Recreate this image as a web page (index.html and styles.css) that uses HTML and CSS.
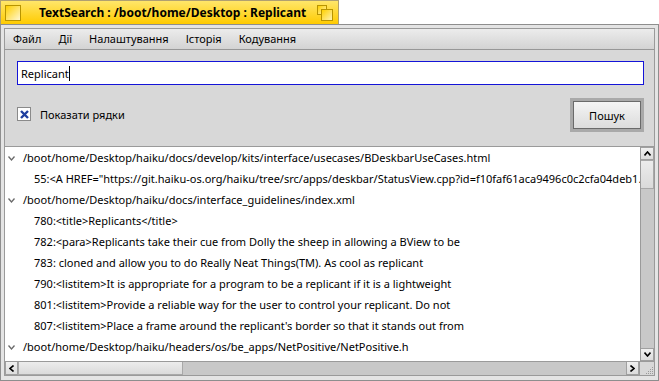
FILE: index.html
```html
<!DOCTYPE html>
<html lang="uk">
<head>
<meta charset="UTF-8">
<title>TextSearch</title>
<link rel="stylesheet" href="styles.css">
</head>
<body>
<div class="tab">
    <span class="close-box"></span>
    <span class="tab-title">TextSearch : /boot/home/Desktop : Replicant</span>
    <span class="zoom-box"><i class="zb-back"></i><i class="zb-front"></i></span>
</div>
<div class="window">
    <div class="menubar">
        <span class="menu-item">Файл</span>
        <span class="menu-item">Дії</span>
        <span class="menu-item">Налаштування</span>
        <span class="menu-item">Історія</span>
        <span class="menu-item">Кодування</span>
    </div>
    <div class="content">
        <div class="field">Replicant<span class="caret"></span></div>
        <div class="options">
            <label class="check">
                <span class="box">
                    <svg width="11" height="11" viewBox="0 0 11 11"><path d="M2 2 L9 9 M9 2 L2 9" stroke="#1f3f9f" stroke-width="2.4"/></svg>
                </span>
                Показати рядки
            </label>
            <div class="default-frame"><button class="button1">Пошук</button></div>
        </div>
        <div class="results">
            <div class="list-area">
                <div class="list">
                    <div class="row parent"><svg class="arrow" width="7" height="5" viewBox="0 0 7 5"><path d="M0.5 0.5 L3.5 4 L6.5 0.5" fill="none" stroke="#6a6a6a" stroke-width="1.3"/></svg>/boot/home/Desktop/haiku/docs/develop/kits/interface/usecases/BDeskbarUseCases.html</div>
                    <div class="row child">55:&lt;A HREF="https://git.haiku-os.org/haiku/tree/src/apps/deskbar/StatusView.cpp?id=f10faf61aca9496c0c2cfa04deb1.</div>
                    <div class="row parent"><svg class="arrow" width="7" height="5" viewBox="0 0 7 5"><path d="M0.5 0.5 L3.5 4 L6.5 0.5" fill="none" stroke="#6a6a6a" stroke-width="1.3"/></svg>/boot/home/Desktop/haiku/docs/interface_guidelines/index.xml</div>
                    <div class="row child">780:&lt;title&gt;Replicants&lt;/title&gt;</div>
                    <div class="row child">782:&lt;para&gt;Replicants take their cue from Dolly the sheep in allowing a BView to be</div>
                    <div class="row child">783: cloned and allow you to do Really Neat Things(TM). As cool as replicant</div>
                    <div class="row child">790:&lt;listitem&gt;It is appropriate for a program to be a replicant if it is a lightweight</div>
                    <div class="row child">801:&lt;listitem&gt;Provide a reliable way for the user to control your replicant. Do not</div>
                    <div class="row child">807:&lt;listitem&gt;Place a frame around the replicant's border so that it stands out from</div>
                    <div class="row parent"><svg class="arrow" width="7" height="5" viewBox="0 0 7 5"><path d="M0.5 0.5 L3.5 4 L6.5 0.5" fill="none" stroke="#6a6a6a" stroke-width="1.3"/></svg>/boot/home/Desktop/haiku/headers/os/be_apps/NetPositive/NetPositive.h</div>
                </div>
                <div class="vscroll">
                    <span class="sb-btn"><svg width="7" height="5" viewBox="0 0 7 5"><path d="M0.5 4.5 L3.5 1 L6.5 4.5" fill="none" stroke="#000" stroke-width="1.6"/></svg></span>
                    <span class="sb-thumb v"></span>
                    <span class="sb-track"></span>
                    <span class="sb-btn"><svg width="7" height="5" viewBox="0 0 7 5"><path d="M0.5 0.5 L3.5 4 L6.5 0.5" fill="none" stroke="#000" stroke-width="1.6"/></svg></span>
                </div>
            </div>
            <div class="hscroll">
                <span class="sb-btn"><svg width="5" height="7" viewBox="0 0 5 7"><path d="M4.5 0.5 L1 3.5 L4.5 6.5" fill="none" stroke="#000" stroke-width="1.6"/></svg></span>
                <span class="sb-thumb h"></span>
                <span class="sb-track"></span>
                <span class="sb-btn"><svg width="5" height="7" viewBox="0 0 5 7"><path d="M0.5 0.5 L4 3.5 L0.5 6.5" fill="none" stroke="#000" stroke-width="1.6"/></svg></span>
                <span class="corner">
                    <svg width="10" height="10" viewBox="0 0 10 10" fill="#9a9a9a">
                        <rect x="8" y="2" width="1" height="1"/><rect x="6" y="4" width="1" height="1"/><rect x="8" y="4" width="1" height="1"/>
                        <rect x="4" y="6" width="1" height="1"/><rect x="6" y="6" width="1" height="1"/><rect x="8" y="6" width="1" height="1"/>
                        <rect x="2" y="8" width="1" height="1"/><rect x="4" y="8" width="1" height="1"/><rect x="6" y="8" width="1" height="1"/><rect x="8" y="8" width="1" height="1"/>
                    </svg>
                </span>
            </div>
        </div>
    </div>
</div>
</body>
</html>
```

FILE: styles.css
```css
body {
    margin: 0;
    background: #fff;
    font-family: "Noto Sans", sans-serif;
    font-size: 11px;
    color: #000;
    width: 659px;
    height: 381px;
    overflow: hidden;
}

/* Вкладка заголовка */
.tab {
    width: 339px;
    height: 24px;
    box-sizing: border-box;
    display: flex;
    align-items: center;
    padding: 0 5px 0 5px;
    background: linear-gradient(to bottom, #ffe66a, #ffcb00);
    border: 1px solid #b0a070;
    border-bottom: none;
}
.close-box {
    width: 16px;
    height: 16px;
    box-sizing: border-box;
    border: 1px solid #b89400;
    background: linear-gradient(to bottom right, #ffd000, #fff7d2);
    margin-left: -1px;
}
.tab-title {
    font-weight: bold;
    font-size: 12px;
    margin-left: 18px;
    flex: 1;
    white-space: nowrap;
}
.zoom-box {
    position: relative;
    width: 16px;
    height: 16px;
}
.zoom-box i {
    position: absolute;
    box-sizing: border-box;
    border: 1px solid #b89400;
}
.zb-back {
    left: 0;
    top: 0;
    width: 10px;
    height: 10px;
    background: linear-gradient(to bottom right, #ffd000, #fff2b0);
}
.zb-front {
    left: 4px;
    top: 4px;
    width: 12px;
    height: 12px;
    background: linear-gradient(to bottom right, #ffd000, #fff2b0);
}

/* Рамка окна */
.window {
    width: 659px;
    height: 357px;
    box-sizing: border-box;
    border: 1px solid #8e8e8e;
    background: #e4e4e4;
    padding: 3px;
}
.window > * {
    border-left: 1px solid #9a9a9a;
    border-right: 1px solid #9a9a9a;
}

.menubar {
    height: 22px;
    box-sizing: border-box;
    border-top: 1px solid #9a9a9a;
    border-bottom: 1px solid #979797;
    background: linear-gradient(to bottom, #ececec, #d3d3d3);
    display: flex;
    align-items: center;
}
.menu-item {
    padding: 0 9px 1px 8px;
    line-height: 20px;
}

.content {
    height: 326px;
    box-sizing: border-box;
    background: #d8d8d8;
    border-bottom: 1px solid #9a9a9a;
    padding-top: 11px;
    display: flex;
    flex-direction: column;
}

.field {
    margin: 0 10px 0 12px;
    height: 24px;
    box-sizing: border-box;
    border: 1px solid #1414d8;
    background: #fff;
    padding-left: 3px;
    display: flex;
    align-items: center;
}
.caret {
    display: inline-block;
    width: 1px;
    height: 15px;
    background: #000;
}

.options {
    margin: 13px 10px 0 12px;
    height: 34px;
    display: flex;
    align-items: center;
    justify-content: space-between;
}
.check {
    display: flex;
    align-items: center;
    gap: 9px;
    margin-top: -2px;
}
.box {
    width: 14px;
    height: 14px;
    box-sizing: border-box;
    border: 1px solid #8a8a8a;
    background: #fff;
    display: flex;
    align-items: center;
    justify-content: center;
}
.default-frame {
    width: 74px;
    height: 34px;
    box-sizing: border-box;
    background: #a9a9a9;
    padding: 3px;
}
.button1 {
    width: 100%;
    height: 100%;
    box-sizing: border-box;
    border: 1px solid #6a6a6a;
    background: linear-gradient(to bottom, #f4f4f4, #dcdcdc);
    font-family: "Noto Sans", sans-serif;
    font-size: 11px;
    color: #000;
    padding: 0;
}

.results {
    margin-top: 14px;
    flex: 1;
    display: flex;
    flex-direction: column;
    border-top: 1px solid #9a9a9a;
}
.list-area {
    flex: 1;
    display: flex;
    min-height: 0;
}
.list {
    flex: 1;
    background: #fff;
    overflow: hidden;
}
.row {
    height: 21px;
    line-height: 21px;
    white-space: nowrap;
    display: flex;
    align-items: center;
}
.row.parent {
    padding-left: 3px;
}
.row.child {
    padding-left: 29px;
}
.arrow {
    margin-right: 8px;
    margin-top: 1px;
}

.vscroll {
    width: 14px;
    box-sizing: border-box;
    border-left: 1px solid #9a9a9a;
    background: #c4c4c4;
    display: flex;
    flex-direction: column;
}
.hscroll {
    height: 14px;
    box-sizing: border-box;
    border-top: 1px solid #9a9a9a;
    background: #c4c4c4;
    display: flex;
}
.sb-btn {
    flex: 0 0 13px;
    height: 13px;
    box-sizing: border-box;
    background: linear-gradient(to bottom, #f0f0f0, #dcdcdc);
    border: 1px solid #a0a0a0;
    display: flex;
    align-items: center;
    justify-content: center;
}
.hscroll .sb-btn {
    border-top: none;
}
.vscroll .sb-btn {
    border-left: none;
}
.sb-thumb {
    box-sizing: border-box;
    background: linear-gradient(to bottom, #ececec, #dadada);
    border: 1px solid #a8a8a8;
}
.sb-thumb.v {
    height: 29px;
    border-left: none;
}
.sb-thumb.h {
    width: 165px;
    border-top: none;
}
.sb-track {
    flex: 1;
    background: #c8c8c8;
}
.corner {
    width: 14px;
    background: #d8d8d8;
    border-left: 1px solid #9a9a9a;
    display: flex;
    align-items: flex-end;
    justify-content: flex-end;
}
```
